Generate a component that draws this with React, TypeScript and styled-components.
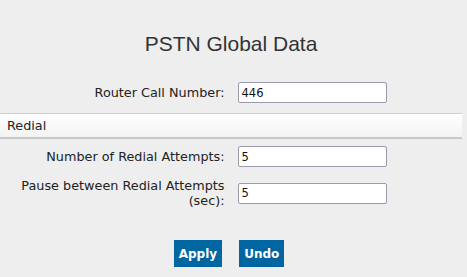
import React from "react";
import styled, { createGlobalStyle } from "styled-components";

const Global = createGlobalStyle`
  html, body { margin: 0; padding: 0; background: #eeeeee; }
  body { font-family: "DejaVu Sans", Verdana, sans-serif; font-size: 12.8px; color: #222; }
`;

const Page = styled.div`
  width: 462px;
  padding-top: 31px;
`;

const Title = styled.h1`
  margin: 0;
  font-family: "Liberation Sans", Arial, sans-serif;
  font-weight: normal;
  font-size: 21px;
  line-height: 26px;
  color: #333;
  text-align: center;
`;

const Form = styled.div`
  display: grid;
  grid-template-columns: 1fr 1fr;
  column-gap: 13px;
  align-items: center;
  padding-top: 25px;
`;

const Label = styled.label`
  text-align: right;
  line-height: 15px;
`;

const Field = styled.input`
  box-sizing: border-box;
  width: 149px;
  height: 21px;
  margin: 0;
  padding: 0 3px;
  border: 1px solid #9a9aac;
  border-radius: 2px;
  background: #fff;
  font-family: "DejaVu Sans", Verdana, sans-serif;
  font-size: 11.5px;
  color: #111;
  outline: none;
`;

const Row = styled.div<{ $mt: number }>`
  display: contents;
  & > * { margin-top: ${(p) => p.$mt}px; }
`;

const Section = styled.div`
  grid-column: 1 / -1;
  margin-top: 10px;
  height: 23px;
  border-top: 1px solid #cfcfcf;
  border-bottom: 2px solid #c8c8c8;
  background: linear-gradient(#ffffff, #f3f3f3);
  padding-left: 7px;
  line-height: 23px;
  color: #222;
`;

const Buttons = styled.div`
  display: flex;
  justify-content: center;
  gap: 17px;
  padding-top: 32px;
  padding-right: 4px;
`;

const Button = styled.button`
  height: 27px;
  padding: 0 5px;
  border: none;
  border-radius: 0;
  background: #0066a1;
  color: #fff;
  font-family: "DejaVu Sans", Verdana, sans-serif;
  font-weight: bold;
  font-size: 12px;
  cursor: pointer;
`;

export default function App() {
  return (
    <>
      <Global />
      <Page>
        <Title>PSTN Global Data</Title>
        <Form>
          <Row $mt={0}>
            <Label>Router Call Number:</Label>
            <Field defaultValue="446" />
          </Row>
          <Section>Redial</Section>
          <Row $mt={7}>
            <Label>Number of Redial Attempts:</Label>
            <Field defaultValue="5" />
          </Row>
          <Row $mt={11}>
            <Label>Pause between Redial Attempts (sec):</Label>
            <Field defaultValue="5" />
          </Row>
        </Form>
        <Buttons>
          <Button>Apply</Button>
          <Button>Undo</Button>
        </Buttons>
      </Page>
    </>
  );
}
